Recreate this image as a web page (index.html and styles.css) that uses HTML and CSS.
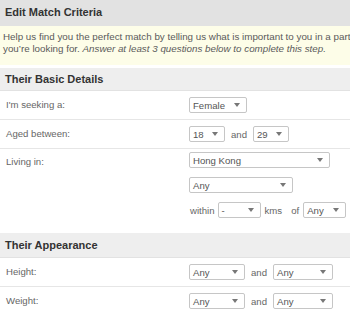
FILE: index.html
```html
<html>
    <head>
        <link rel="stylesheet" href="styles.css">
        <title>Edit Match Criteria</title>
    </head>
    <body>
        <div class="page">
            <div class="title">Edit Match Criteria</div>
            <div class="notice">
                Help us find you the perfect match by telling us what is important to you in a particular area,<br>
                you&rsquo;re looking for. <em>Answer at least 3 questions below to complete this step.</em>
            </div>

            <div class="section">
                <div class="section-head">Their Basic Details</div>
                <div class="row">
                    <div class="label">I'm seeking a:</div>
                    <div class="field">
                        <span class="select w-gender">Female<i class="arrow"></i></span>
                    </div>
                </div>
                <div class="row">
                    <div class="label">Aged between:</div>
                    <div class="field">
                        <span class="select w-age">18<i class="arrow"></i></span>
                        <span class="word">and</span>
                        <span class="select w-age">29<i class="arrow"></i></span>
                    </div>
                </div>
                <div class="row row-last">
                    <div class="label">Living in:</div>
                    <div class="field stack">
                        <span class="select w-country">Hong Kong<i class="arrow"></i></span>
                        <span class="select w-region">Any<i class="arrow"></i></span>
                        <div class="line">
                            <span class="word">within</span>
                            <span class="select w-small">-<i class="arrow"></i></span>
                            <span class="word kms">kms</span>
                            <span class="word of">of</span>
                            <span class="select w-small">Any<i class="arrow"></i></span>
                        </div>
                    </div>
                </div>
            </div>

            <div class="section">
                <div class="section-head">Their Appearance</div>
                <div class="row">
                    <div class="label">Height:</div>
                    <div class="field">
                        <span class="select w-from">Any<i class="arrow"></i></span>
                        <span class="word">and</span>
                        <span class="select w-to">Any<i class="arrow"></i></span>
                    </div>
                </div>
                <div class="row">
                    <div class="label">Weight:</div>
                    <div class="field">
                        <span class="select w-from">Any<i class="arrow"></i></span>
                        <span class="word">and</span>
                        <span class="select w-to">Any<i class="arrow"></i></span>
                    </div>
                </div>
            </div>
        </div>
    </body>
</html>
```

FILE: styles.css
```css
body {
    margin: 0px;
    font-family: "Liberation Sans", Arial, sans-serif;
    background: #fff;
}

.page {
    width: 350px;
    height: 314px;
    overflow: hidden;
}

.title {
    height: 26px;
    line-height: 25px;
    padding-left: 5px;
    background: #e2e2e2;
    color: #333;
    font-size: 11px;
    font-weight: bold;
}

.notice {
    height: 39px;
    box-sizing: border-box;
    padding: 5px 0 0 3px;
    background: #fdfde8;
    color: #5a5a5a;
    font-size: 9.8px;
    line-height: 12px;
    white-space: nowrap;
    overflow: hidden;
}

.section {
    margin-top: 3px;
}

.section + .section {
    margin-top: 9px;
}

.section-head {
    height: 22px;
    line-height: 22px;
    padding-left: 5px;
    background: #eeeeee;
    border-bottom: 1px solid #e2e2e2;
    color: #333;
    font-size: 11px;
    font-weight: bold;
}

.section + .section .section-head {
    height: 24px;
    line-height: 25px;
}

.row {
    display: grid;
    grid-template-columns: 183px 1fr;
    align-items: start;
    padding: 6px 0 6px 6px;
    border-bottom: 1px solid #e6e6e6;
}

.row-last {
    border-bottom: none;
    padding-top: 3px;
}

.row-last .label {
    padding-top: 2px;
}

.label {
    color: #666;
    font-size: 9.6px;
    line-height: 16px;
}

.field {
    display: flex;
    align-items: center;
    gap: 4px;
}

.stack {
    flex-direction: column;
    align-items: flex-start;
    gap: 9px;
}

.line {
    display: flex;
    align-items: center;
    gap: 3px;
    padding-left: 1px;
}

.word {
    color: #666;
    font-size: 9.6px;
    padding: 0 2px;
}

.line .word {
    padding: 0;
}

.word.kms {
    margin-left: 1px;
}

.word.of {
    margin-left: 6px;
    margin-right: 1px;
}

.select {
    display: inline-flex;
    align-items: center;
    justify-content: space-between;
    box-sizing: border-box;
    height: 16px;
    padding-left: 3px;
    border: 1px solid #c6c6c6;
    border-radius: 2px;
    background: #fff;
    color: #555;
    font-size: 9.6px;
}

.arrow {
    width: 0;
    height: 0;
    margin-right: 6px;
    border-left: 3px solid transparent;
    border-right: 3px solid transparent;
    border-top: 4px solid #777;
}

.w-gender { width: 58px; }
.w-age { width: 36px; }
.w-country { width: 141px; }
.w-region { width: 104px; }
.w-small { width: 43px; }
.w-from { width: 56px; }
.w-to { width: 60px; }
```
